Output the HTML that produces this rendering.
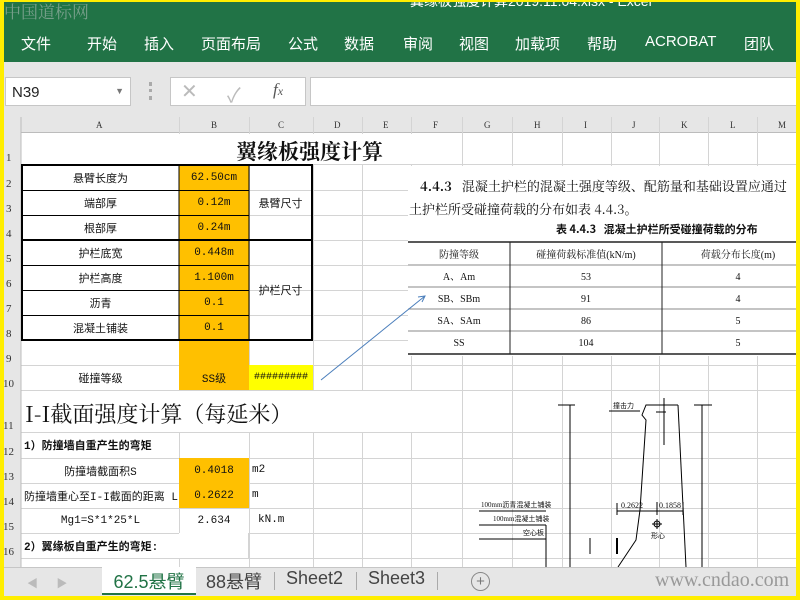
<!DOCTYPE html>
<html><head><meta charset="utf-8"><style>
*{margin:0;padding:0;box-sizing:border-box}
body{width:800px;height:600px;overflow:hidden;position:relative;background:#fff;font-family:"Liberation Sans","Noto Sans CJK SC",sans-serif}
.a{position:absolute}
.m{font-family:"Liberation Mono","Noto Sans CJK SC",monospace;font-size:11px;color:#111}
.s{font-family:"Liberation Serif","Noto Serif CJK SC",serif}
.c{display:flex;align-items:center;justify-content:center;text-align:center}
</style></head><body>
<!-- ribbon -->
<div class="a" style="left:0;top:0;width:800px;height:62px;background:#217346"></div>
<div class="a" style="left:410px;top:-9px;color:#fff;font-size:14px;white-space:nowrap">翼缘板强度计算2019.11.04.xlsx - Excel</div>
<div class="a" style="left:4px;top:-2px;color:#8aa99a;font-size:17px;font-family:'Noto Serif CJK SC',serif;opacity:.8">中国道标网</div>
<div class="a" style="top:33px;left:0;width:800px;height:20px;color:#fff;font-size:15px">
<span class="a" style="left:21px">文件</span><span class="a" style="left:87px">开始</span><span class="a" style="left:144px">插入</span><span class="a" style="left:201px">页面布局</span><span class="a" style="left:288px">公式</span><span class="a" style="left:344px">数据</span><span class="a" style="left:403px">审阅</span><span class="a" style="left:459px">视图</span><span class="a" style="left:515px">加载项</span><span class="a" style="left:587px">帮助</span><span class="a" style="left:645px">ACROBAT</span><span class="a" style="left:744px">团队</span></div>
<!-- formula bar -->
<div class="a" style="left:0;top:62px;width:800px;height:55px;background:#e6e6e6"></div>
<div class="a" style="left:5px;top:77px;width:126px;height:29px;background:#fff;border:1px solid #c6c6c6;font-size:15px;padding:6px 0 0 6px;color:#222">N39<span class="a" style="right:6px;top:8px;font-size:9px;color:#777">▼</span></div>
<div class="a" style="left:149px;top:82px;width:3px;height:18px;border-left:3px dotted #aaa"></div>
<div class="a" style="left:170px;top:77px;width:136px;height:29px;background:#fff;border:1px solid #c6c6c6;color:#bbb;font-size:20px"><span class="a" style="left:10px;top:1px">✕</span><span class="a" style="left:56px;top:1px">✓</span><span class="a s" style="left:102px;top:2px;color:#555;font-style:italic;font-size:17px">f<span style="font-size:12px">x</span></span></div>
<div class="a" style="left:310px;top:77px;width:490px;height:29px;background:#fff;border:1px solid #c6c6c6"></div>
<!-- col header -->
<div class="a" style="left:0;top:117px;width:800px;height:16px;background:#e6e6e6;border-bottom:1px solid #bcbcbc"></div>
<div class="a s" style="top:120px;left:0;width:800px;font-size:9px;color:#333">
<span class="a" style="left:96px">A</span><span class="a" style="left:211px">B</span><span class="a" style="left:278px">C</span><span class="a" style="left:334px">D</span><span class="a" style="left:383px">E</span><span class="a" style="left:433px">F</span><span class="a" style="left:484px">G</span><span class="a" style="left:534px">H</span><span class="a" style="left:584px">I</span><span class="a" style="left:632px">J</span><span class="a" style="left:681px">K</span><span class="a" style="left:730px">L</span><span class="a" style="left:778px">M</span></div>
<!-- grid -->
<svg class="a" style="left:0;top:117px" width="800" height="450">
<g stroke="#d4d4d4" stroke-width="1">
<line x1="179.5" y1="0" x2="179.5" y2="450"/><line x1="249.5" y1="0" x2="249.5" y2="450"/><line x1="313.5" y1="0" x2="313.5" y2="450"/><line x1="362.5" y1="0" x2="362.5" y2="450"/><line x1="411.5" y1="0" x2="411.5" y2="450"/><line x1="462.5" y1="0" x2="462.5" y2="450"/><line x1="512.5" y1="0" x2="512.5" y2="450"/><line x1="562.5" y1="0" x2="562.5" y2="450"/><line x1="611.5" y1="0" x2="611.5" y2="450"/><line x1="659.5" y1="0" x2="659.5" y2="450"/><line x1="708.5" y1="0" x2="708.5" y2="450"/><line x1="757.5" y1="0" x2="757.5" y2="450"/>
<line x1="0" y1="47.5" x2="800" y2="47.5"/><line x1="0" y1="73.5" x2="800" y2="73.5"/><line x1="0" y1="98.5" x2="800" y2="98.5"/><line x1="0" y1="123.5" x2="800" y2="123.5"/><line x1="0" y1="148.5" x2="800" y2="148.5"/><line x1="0" y1="173.5" x2="800" y2="173.5"/><line x1="0" y1="198.5" x2="800" y2="198.5"/><line x1="0" y1="223.5" x2="800" y2="223.5"/><line x1="0" y1="248.5" x2="800" y2="248.5"/><line x1="0" y1="273.5" x2="800" y2="273.5"/><line x1="0" y1="315.5" x2="800" y2="315.5"/><line x1="0" y1="341.5" x2="800" y2="341.5"/><line x1="0" y1="366.5" x2="800" y2="366.5"/><line x1="0" y1="391.5" x2="800" y2="391.5"/><line x1="0" y1="416.5" x2="800" y2="416.5"/><line x1="0" y1="441.5" x2="800" y2="441.5"/>
</g>
<rect x="0" y="0" width="21" height="450" fill="#e6e6e6"/><line x1="21" y1="0" x2="21" y2="450" stroke="#bcbcbc"/>
</svg>
<div class="a s" style="left:6px;top:117px;font-size:11px;color:#333;line-height:1">
<span class="a" style="top:36px">1</span><span class="a" style="top:62px">2</span><span class="a" style="top:87px">3</span><span class="a" style="top:112px">4</span><span class="a" style="top:137px">5</span><span class="a" style="top:162px">6</span><span class="a" style="top:187px">7</span><span class="a" style="top:212px">8</span><span class="a" style="top:237px">9</span><span class="a" style="top:262px;left:-3px">10</span><span class="a" style="top:304px;left:-3px">11</span><span class="a" style="top:330px;left:-3px">12</span><span class="a" style="top:355px;left:-3px">13</span><span class="a" style="top:380px;left:-3px">14</span><span class="a" style="top:405px;left:-3px">15</span><span class="a" style="top:430px;left:-3px">16</span></div>
<div class="a" style="left:22px;top:134px;width:390px;height:30px;background:#fff"></div>
<div class="a" style="left:236px;top:136px;font-size:21px;font-weight:bold;font-family:'Noto Serif CJK SC',serif;color:#111">翼缘板强度计算</div>
<!-- fills -->
<div class="a" style="left:179px;top:165px;width:70px;height:225px;background:#ffc000"></div>
<div class="a" style="left:249px;top:365px;width:64px;height:25px;background:#ffff00"></div>
<div class="a" style="left:179px;top:458px;width:70px;height:50px;background:#ffc000"></div>
<!-- table borders -->
<svg class="a" style="left:0;top:0" width="800" height="600">
<g stroke="#000" fill="none">
<rect x="22" y="165" width="290" height="175" stroke-width="2"/>
<line x1="22" y1="240" x2="312" y2="240" stroke-width="2"/>
<line x1="179" y1="165" x2="179" y2="340"/><line x1="249" y1="165" x2="249" y2="340"/>
<line x1="22" y1="190.5" x2="249" y2="190.5"/><line x1="22" y1="215.5" x2="249" y2="215.5"/><line x1="22" y1="265.5" x2="249" y2="265.5"/><line x1="22" y1="290.5" x2="249" y2="290.5"/><line x1="22" y1="315.5" x2="249" y2="315.5"/>
</g>
</svg>
<div class="a m" style="left:0;top:0;width:800px">
<div class="a c" style="left:22px;top:165px;width:157px;height:25px">悬臂长度为</div>
<div class="a c" style="left:22px;top:190px;width:157px;height:25px">端部厚</div>
<div class="a c" style="left:22px;top:215px;width:157px;height:25px">根部厚</div>
<div class="a c" style="left:22px;top:240px;width:157px;height:25px">护栏底宽</div>
<div class="a c" style="left:22px;top:265px;width:157px;height:25px">护栏高度</div>
<div class="a c" style="left:22px;top:290px;width:157px;height:25px">沥青</div>
<div class="a c" style="left:22px;top:315px;width:157px;height:25px">混凝土铺装</div>
<div class="a c" style="left:22px;top:365px;width:157px;height:25px">碰撞等级</div>
<div class="a c" style="left:179px;top:165px;width:70px;height:25px">62.50cm</div>
<div class="a c" style="left:179px;top:190px;width:70px;height:25px">0.12m</div>
<div class="a c" style="left:179px;top:215px;width:70px;height:25px">0.24m</div>
<div class="a c" style="left:179px;top:240px;width:70px;height:25px">0.448m</div>
<div class="a c" style="left:179px;top:265px;width:70px;height:25px">1.100m</div>
<div class="a c" style="left:179px;top:290px;width:70px;height:25px">0.1</div>
<div class="a c" style="left:179px;top:315px;width:70px;height:25px">0.1</div>
<div class="a c" style="left:179px;top:365px;width:70px;height:25px">SS级</div>
<div class="a c" style="left:249px;top:165px;width:63px;height:75px">悬臂尺寸</div>
<div class="a c" style="left:249px;top:240px;width:63px;height:100px">护栏尺寸</div>
<div class="a c" style="left:249px;top:365px;width:64px;height:25px;font-size:10px">#########</div>
</div>
<!-- pasted image -->
<div class="a" style="left:408px;top:166px;width:392px;height:190px;background:#fff"></div>
<div class="a" style="left:420px;top:176px;font-size:13px;white-space:nowrap;font-family:'Noto Serif CJK SC',serif;color:#111"><b>4.4.3</b>&nbsp;&nbsp; 混凝土护栏的混凝土强度等级、配筋量和基础设置应通过</div>
<div class="a" style="left:409px;top:199px;font-size:13px;white-space:nowrap;font-family:'Noto Serif CJK SC',serif;color:#111">土护栏所受碰撞荷载的分布如表 4.4.3。</div>
<div class="a" style="left:556px;top:221px;font-size:11px;font-weight:bold;white-space:nowrap;font-family:'Noto Sans CJK SC',sans-serif;color:#111">表 4.4.3&nbsp;&nbsp; 混凝土护栏所受碰撞荷载的分布</div>
<svg class="a" style="left:408px;top:240px" width="392" height="120">
<g stroke="#222" fill="none"><line x1="0" y1="2" x2="392" y2="2" stroke-width="1.5"/><line x1="0" y1="25" x2="392" y2="25" stroke="#888"/><line x1="0" y1="47" x2="392" y2="47" stroke="#888"/><line x1="0" y1="69" x2="392" y2="69" stroke="#888"/><line x1="0" y1="91" x2="392" y2="91" stroke="#888"/><line x1="0" y1="114" x2="392" y2="114" stroke-width="1.5"/><line x1="102" y1="2" x2="102" y2="114"/><line x1="254" y1="2" x2="254" y2="114"/></g>
<g font-family="Liberation Serif,Noto Serif CJK SC,serif" font-size="10" fill="#111" text-anchor="middle">
<text x="51" y="18">防撞等级</text><text x="178" y="18">碰撞荷载标准值(kN/m)</text><text x="330" y="18">荷载分布长度(m)</text>
<text x="51" y="40">A、Am</text><text x="178" y="40">53</text><text x="330" y="40">4</text>
<text x="51" y="62">SB、SBm</text><text x="178" y="62">91</text><text x="330" y="62">4</text>
<text x="51" y="84">SA、SAm</text><text x="178" y="84">86</text><text x="330" y="84">5</text>
<text x="51" y="106">SS</text><text x="178" y="106">104</text><text x="330" y="106">5</text></g>
</svg>
<svg class="a" style="left:0;top:0" width="800" height="600">
<line x1="321" y1="380" x2="425" y2="296" stroke="#4a7ebb" stroke-width="1"/>
<path d="M418 297 L425 296 L422 302" stroke="#4a7ebb" fill="none"/>
</svg>
<!-- section 2 -->
<div class="a" style="left:22px;top:391px;width:440px;height:41px;background:#fff"></div>
<div class="a" style="left:25px;top:398px;font-size:22px;font-family:'Noto Serif CJK SC',serif;color:#111;white-space:nowrap">I-I截面强度计算（每延米）</div>
<div class="a m" style="left:0;top:0">
<div class="a" style="left:24px;top:437px;font-weight:bold;white-space:nowrap">1）防撞墙自重产生的弯矩</div>
<div class="a c" style="left:22px;top:458px;width:157px;height:25px">防撞墙截面积S</div>
<div class="a" style="left:24px;top:488px;white-space:nowrap">防撞墙重心至I-I截面的距离 L</div>
<div class="a c" style="left:22px;top:508px;width:157px;height:25px">Mg1=S*1*25*L</div>
<div class="a c" style="left:179px;top:458px;width:70px;height:25px">0.4018</div>
<div class="a c" style="left:179px;top:483px;width:70px;height:25px">0.2622</div>
<div class="a c" style="left:179px;top:508px;width:70px;height:25px">2.634</div>
<div class="a" style="left:252px;top:464px">m2</div><div class="a" style="left:252px;top:489px">m</div><div class="a" style="left:258px;top:514px">kN.m</div>
<div class="a" style="left:24px;top:538px;font-weight:bold;white-space:nowrap">2）翼缘板自重产生的弯矩:</div>
</div>
<div class="a" style="left:179px;top:533px;width:70px;height:25px;background:#fff;border-right:1px solid #d4d4d4"></div>
<!-- drawing -->
<svg class="a" style="left:0;top:0" width="800" height="567">
<g stroke="#000" fill="none" stroke-width="1">
<line x1="570" y1="405" x2="570" y2="567"/><line x1="558" y1="405" x2="575" y2="405"/>
<line x1="702" y1="405" x2="702" y2="567"/><line x1="694" y1="405" x2="712" y2="405"/>
<path d="M678 405 L646 405 L642 415 L646 420 L640 510 L636 540 L618 567"/>
<path d="M678 405 L686 567"/>
<line x1="609" y1="411" x2="640" y2="411"/>
<line x1="664" y1="398" x2="664" y2="445"/><line x1="656" y1="412" x2="666" y2="412"/>
<line x1="617" y1="511" x2="683" y2="511"/><line x1="617" y1="503" x2="617" y2="515"/><line x1="657" y1="502" x2="657" y2="515"/><line x1="683" y1="502" x2="683" y2="515"/>
<line x1="479" y1="511" x2="546" y2="511"/><line x1="479" y1="525" x2="546" y2="525"/><line x1="479" y1="539" x2="546" y2="539"/><line x1="546" y1="525" x2="546" y2="567"/>
<line x1="590" y1="538" x2="590" y2="554"/><line x1="617" y1="538" x2="617" y2="554" stroke-width="2"/>
<circle cx="657" cy="524" r="3"/><line x1="652" y1="524" x2="662" y2="524"/><line x1="657" y1="519" x2="657" y2="529"/>
</g>
<g font-size="7" fill="#111" font-family="Liberation Serif,Noto Sans CJK SC,serif">
<text x="613" y="408">撞击力</text><text x="481" y="507">100mm沥青混凝土铺装</text><text x="493" y="521">100mm混凝土铺装</text><text x="523" y="535">空心板</text><text x="621" y="508" font-size="8">0.2622</text><text x="659" y="508" font-size="8">0.1858</text><text x="651" y="538">形心</text>
</g>
</svg>
<!-- tabs -->
<div class="a" style="left:0;top:567px;width:800px;height:33px;background:#e6e6e6;border-top:1px solid #c6c6c6"></div>
<div class="a" style="left:27px;top:575px;color:#bbb;font-size:11px">◀&nbsp;&nbsp;&nbsp;&nbsp;&nbsp;&nbsp;▶</div>
<div class="a" style="left:102px;top:567px;width:94px;height:28px;background:#fff;border-bottom:2px solid #217346;color:#217346;font-size:18px;text-align:center;padding-top:1px">62.5悬臂</div>
<div class="a" style="left:206px;top:568px;font-size:18px;color:#444">88悬臂</div>
<div class="a" style="left:274px;top:572px;width:1px;height:18px;background:#aaa"></div>
<div class="a" style="left:286px;top:568px;font-size:18px;color:#444">Sheet2</div>
<div class="a" style="left:356px;top:572px;width:1px;height:18px;background:#aaa"></div>
<div class="a" style="left:368px;top:568px;font-size:18px;color:#444">Sheet3</div>
<div class="a" style="left:437px;top:572px;width:1px;height:18px;background:#aaa"></div>
<div class="a c" style="left:471px;top:572px;width:19px;height:19px;border:1.5px solid #888;border-radius:50%;color:#777;font-size:15px">+</div>
<div class="a s" style="left:655px;top:569px;font-size:20px;color:#999">www.cndao.com</div>
<!-- yellow frame -->
<div class="a" style="left:0;top:0;width:800px;height:600px;border:4px solid #ffee00;border-top-width:2px"></div>
</body></html>
